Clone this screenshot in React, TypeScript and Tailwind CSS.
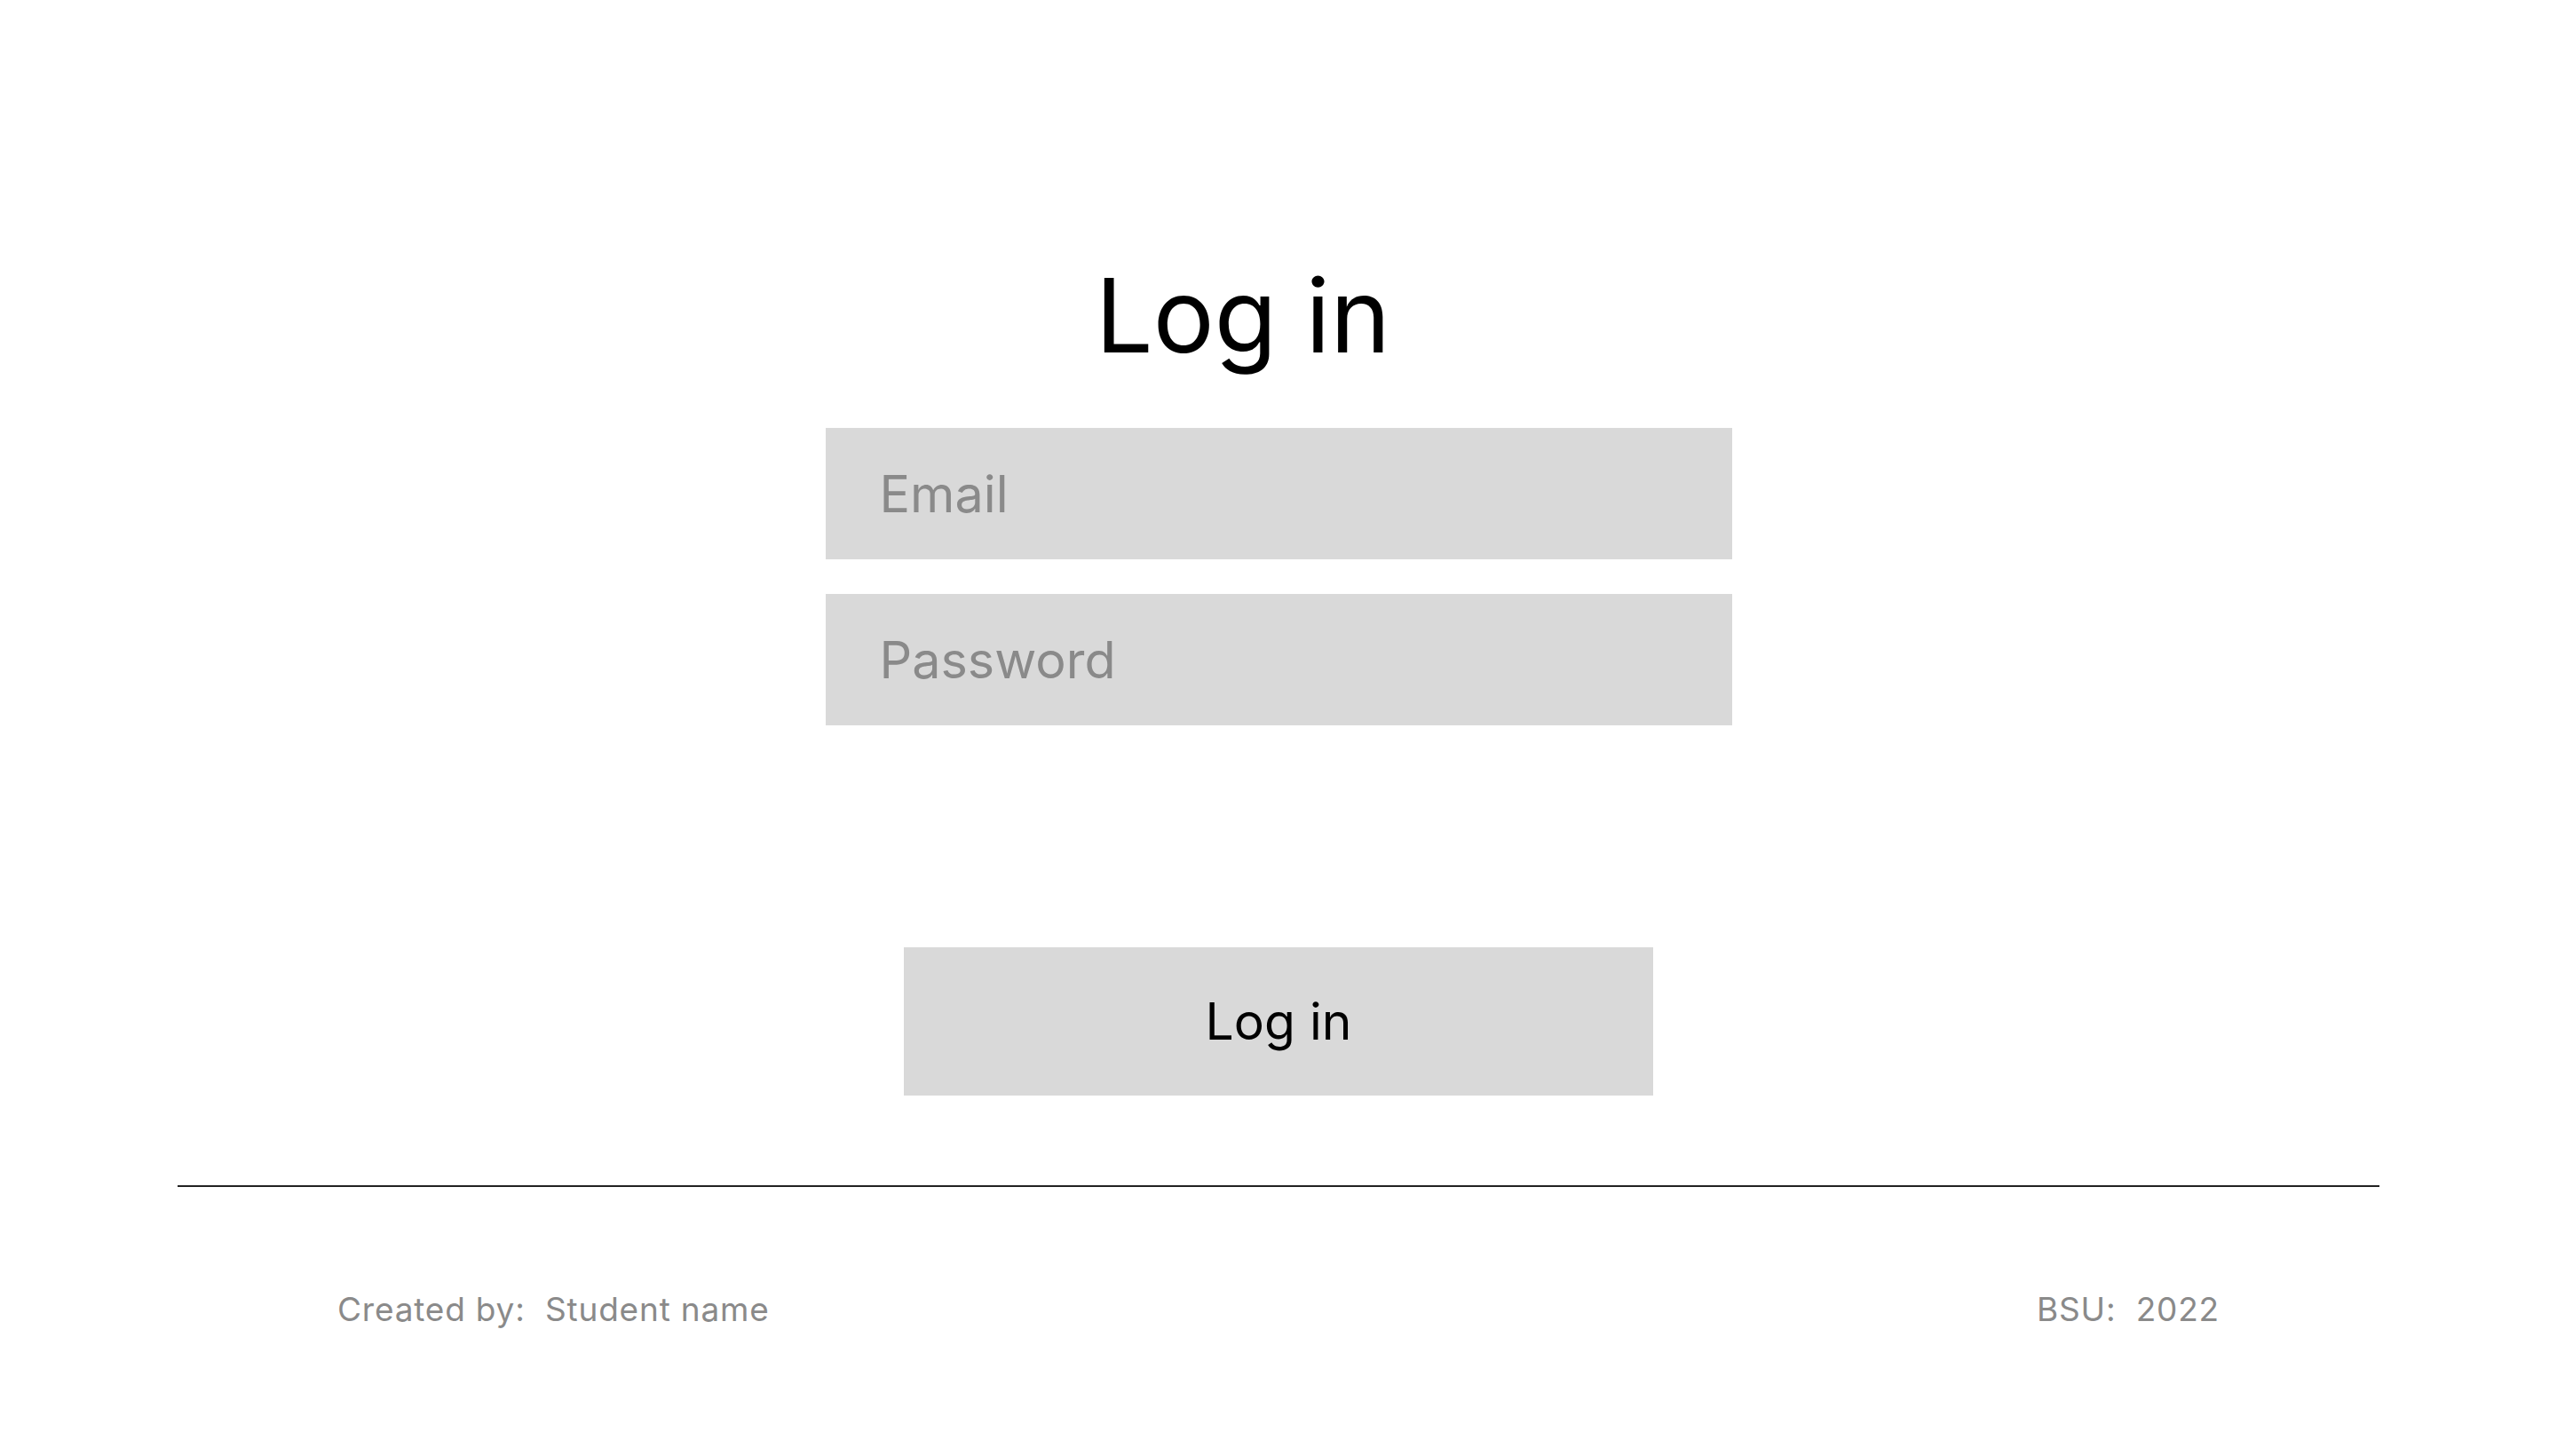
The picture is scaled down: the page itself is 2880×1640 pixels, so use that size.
import { useState } from "react";

const LoginPage = () => {
    const [email, setEmail] = useState('');
    const [password, setPassword] = useState('');

    return (
        <div className="w-full min-h-screen bg-white font-['Inter','Noto_Sans',sans-serif] text-black">
            <div className="flex flex-col items-center pt-[298px]">
                <h1 className="text-[115px] leading-none font-normal mr-[80px]">Log in</h1>

                <form onSubmit={(e) => e.preventDefault()} className="flex flex-col items-center">
                    <input
                        id="email"
                        type="email"
                        value={email}
                        placeholder="Email"
                        onChange={(e) => setEmail(e.target.value)}
                        className="mt-[69px] w-[1021px] h-[148px] bg-[#d9d9d9] pl-[61px] text-[57.5px] leading-none outline-none placeholder:text-[#8a8a8a]"
                    />
                    <input
                        id="password"
                        type="password"
                        value={password}
                        placeholder="Password"
                        onChange={(e) => setPassword(e.target.value)}
                        className="mt-[39px] w-[1021px] h-[148px] bg-[#d9d9d9] pl-[61px] text-[57.5px] leading-none outline-none placeholder:text-[#8a8a8a]"
                    />

                    <button type="submit" className="mt-[250px] w-[844px] h-[167px] bg-[#d9d9d9] text-[57px] leading-none text-black">
                        Log in
                    </button>
                </form>
            </div>

            <div className="mx-[200px] mt-[101px] h-[2px] bg-[#222]"></div>

            <div className="flex justify-between px-[380px] mt-[119px] text-[37px] leading-none tracking-[0.8px] text-[#8a8a8a]">
                <p className="whitespace-pre">Created by:  Student name</p>
                <p className="whitespace-pre">BSU:  2022</p>
            </div>
        </div>
    )
}

export default LoginPage;
